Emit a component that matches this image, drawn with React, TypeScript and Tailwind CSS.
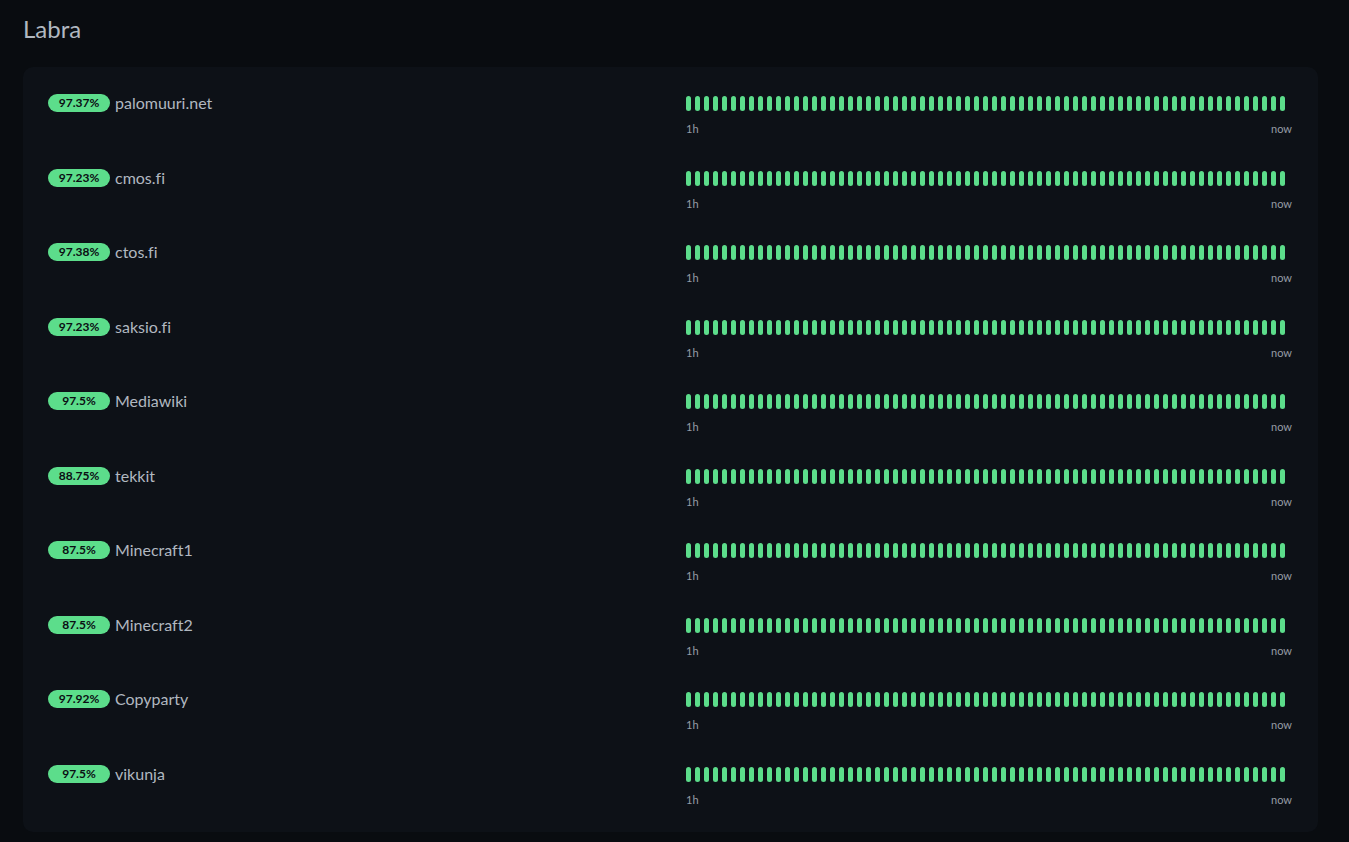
import React from "react";

const monitors = [
  { pct: "97.37%", name: "palomuuri.net" },
  { pct: "97.23%", name: "cmos.fi" },
  { pct: "97.38%", name: "ctos.fi" },
  { pct: "97.23%", name: "saksio.fi" },
  { pct: "97.5%", name: "Mediawiki" },
  { pct: "88.75%", name: "tekkit" },
  { pct: "87.5%", name: "Minecraft1" },
  { pct: "87.5%", name: "Minecraft2" },
  { pct: "97.92%", name: "Copyparty" },
  { pct: "97.5%", name: "vikunja" },
];

const beats = Array.from({ length: 67 }, (_, i) => i);

function Row({ pct, name }: { pct: string; name: string }) {
  return (
    <div className="flex h-[40px] items-start">
      <div className="flex w-[638px] items-center gap-[5px]">
        <span className="inline-block h-[18px] w-[62px] rounded-full bg-[#5cdd8b] text-center text-[12px] font-bold leading-[18px] text-[#0b0e13]">
          {pct}
        </span>
        <span className="text-[16px] leading-[18px] text-[#b1b8c0]">{name}</span>
      </div>
      <div className="flex w-[606px] flex-col">
        <div className="mt-[2px] flex h-[15px] gap-[4px]">
          {beats.map((b) => (
            <div key={b} className="h-[15px] w-[5px] rounded-full bg-[#5cdd8b]" />
          ))}
        </div>
        <div className="mt-[11px] flex justify-between text-[11px] leading-[13px] text-[#959ca5]">
          <span>1h</span>
          <span>now</span>
        </div>
      </div>
    </div>
  );
}

export default function App() {
  return (
    <div
      className="min-h-screen w-full bg-[#090c10] [font-variant-ligatures:none]"
      style={{ fontFamily: "Lato, 'Noto Sans', sans-serif" }}
    >
      <div className="px-[23px] pt-[13px]">
        <h1 className="mb-[22px] text-[24px] font-normal leading-[32px] text-[#b1b8c0]">Labra</h1>
        <div className="flex w-[1295px] flex-col gap-[34.5px] rounded-[10px] bg-[#0d1117] px-[25px] pb-[27.5px] pt-[27px]">
          {monitors.map((m, i) => (
            <Row key={i} pct={m.pct} name={m.name} />
          ))}
        </div>
      </div>
    </div>
  );
}
